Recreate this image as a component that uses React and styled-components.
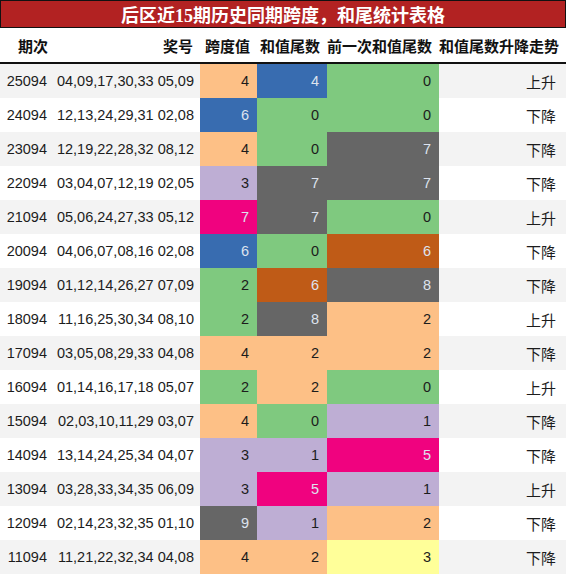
import styled, { createGlobalStyle } from "styled-components";

const GlobalStyle = createGlobalStyle`
  body {
    margin: 0;
    background: #fff;
    font-family: "Liberation Sans", "Noto Sans CJK SC", sans-serif;
  }
`;

// ColorBrewer "Accent"
const PALETTE = ["#7fc97f", "#beaed4", "#fdc086", "#ffff99", "#386cb0", "#f0027f", "#bf5b17", "#666666"];
const DARK = ["#386cb0", "#f0027f", "#bf5b17", "#666666"];

const pick = (v, offset = 0) => PALETTE[Math.min(v - offset, PALETTE.length - 1)];

const rows = [
  ["25094", "04,09,17,30,33 05,09", 4, 4, 0, "上升"],
  ["24094", "12,13,24,29,31 02,08", 6, 0, 0, "下降"],
  ["23094", "12,19,22,28,32 08,12", 4, 0, 7, "下降"],
  ["22094", "03,04,07,12,19 02,05", 3, 7, 7, "下降"],
  ["21094", "05,06,24,27,33 05,12", 7, 7, 0, "上升"],
  ["20094", "04,06,07,08,16 02,08", 6, 0, 6, "下降"],
  ["19094", "01,12,14,26,27 07,09", 2, 6, 8, "下降"],
  ["18094", "11,16,25,30,34 08,10", 2, 8, 2, "上升"],
  ["17094", "03,05,08,29,33 04,08", 4, 2, 2, "下降"],
  ["16094", "01,14,16,17,18 05,07", 2, 2, 0, "上升"],
  ["15094", "02,03,10,11,29 03,07", 4, 0, 1, "下降"],
  ["14094", "13,14,24,25,34 04,07", 3, 1, 5, "下降"],
  ["13094", "03,28,33,34,35 06,09", 3, 5, 1, "上升"],
  ["12094", "02,14,23,32,35 01,10", 9, 1, 2, "下降"],
  ["11094", "11,21,22,32,34 04,08", 4, 2, 3, "下降"],
];

const headers = ["期次", "奖号", "跨度值", "和值尾数", "前一次和值尾数", "和值尾数升降走势"];

const Table = styled.div`
  width: 566px;
`;

const Title = styled.div`
  height: 26px;
  background: #b22222;
  border: 1px solid #111;
  color: #fff;
  font-family: "Liberation Serif", "Noto Sans CJK SC", serif;
  font-weight: bold;
  font-size: 18px;
  display: flex;
  align-items: center;
  justify-content: center;
`;

const Row = styled.div`
  display: grid;
  grid-template-columns: 55px 145px 57px 70px 112px 127px;
  height: 34px;
  background: ${p => (p.$shade ? "#f3f3f3" : "#fff")};
`;

const HeadRow = styled(Row)`
  border-bottom: 2px solid #111;
`;

const Cell = styled.div`
  display: flex;
  align-items: center;
  justify-content: flex-end;
  padding-right: ${p => p.$pad || 8}px;
  font-size: 14.5px;
  white-space: nowrap;
  color: ${p => (DARK.includes(p.$bg) ? "#dde3ee" : "#1c1c1c")};
  background: ${p => p.$bg || "transparent"};
`;

const TrendCell = styled(Cell)`
  font-size: 15px;
  padding-right: 10px;
`;

const HeadCell = styled(Cell)`
  font-weight: bold;
  font-size: 15px;
  color: #111;
  padding-right: 7px;
`;

export default function App() {
  return (
    <>
      <GlobalStyle />
      <Table>
        <Title>后区近15期历史同期跨度，和尾统计表格</Title>
        <HeadRow>
          {headers.map(h => (
            <HeadCell key={h}>{h}</HeadCell>
          ))}
        </HeadRow>
        {rows.map(([issue, nums, span, tail, prev, trend], i) => (
          <Row key={issue} $shade={i % 2 === 0}>
            <Cell>{issue}</Cell>
            <Cell $pad={6}>{nums}</Cell>
            <Cell $bg={pick(span, 2)}>{span}</Cell>
            <Cell $bg={pick(tail)}>{tail}</Cell>
            <Cell $bg={pick(prev)}>{prev}</Cell>
            <TrendCell>{trend}</TrendCell>
          </Row>
        ))}
      </Table>
    </>
  );
}
